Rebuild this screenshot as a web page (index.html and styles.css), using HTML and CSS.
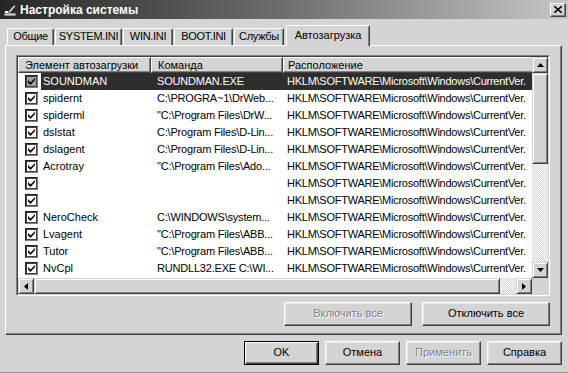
FILE: index.html
```html
<!DOCTYPE html>
<html lang="ru">
<head>
    <meta charset="UTF-8">
    <title>Настройка системы</title>
    <link rel="stylesheet" href="styles.css">
</head>
<body>
    <div class="window">
        <div class="titlebar">
            <svg class="title-icon" width="14" height="14" viewBox="0 0 14 14">
                <path d="M4 10 L11 2 L13 3 L6 11 Z" fill="#e8e8e8" stroke="#222" stroke-width="0.8"/>
                <rect x="1" y="10" width="12" height="3" fill="#d0d0d0" stroke="#333" stroke-width="0.8"/>
                <rect x="2" y="8" width="3" height="2" fill="#fff"/>
            </svg>
            <span class="title">Настройка системы</span>
            <div class="close-btn">
                <svg width="8" height="7" viewBox="0 0 8 7"><path d="M0 0 L8 7 M8 0 L0 7" stroke="#000" stroke-width="1.6"/></svg>
            </div>
        </div>

        <div class="content">
            <div class="tabs">
                <div class="tab tab-general">Общие</div>
                <div class="tab tab-system">SYSTEM.INI</div>
                <div class="tab tab-win">WIN.INI</div>
                <div class="tab tab-boot">BOOT.INI</div>
                <div class="tab tab-services">Службы</div>
                <div class="tab tab-startup active">Автозагрузка</div>
            </div>

            <div class="panel">
                <div class="listview">
                    <div class="lv-inner">
                        <div class="lv-view">
                            <div class="lv-header">
                                <div class="hcell col-name">Элемент автозагрузки</div>
                                <div class="hcell col-cmd">Команда</div>
                                <div class="hcell col-loc">Расположение</div>
                            </div>
                            <div class="lv-rows" id="rows"></div>
                        </div>
                        <div class="vscroll">
                            <div class="sb-btn"><svg width="7" height="4" viewBox="0 0 7 4"><path d="M3.5 0 L7 4 L0 4 Z"/></svg></div>
                            <div class="sb-thumb v-thumb"></div>
                            <div class="sb-track"></div>
                            <div class="sb-btn"><svg width="7" height="4" viewBox="0 0 7 4"><path d="M0 0 L7 0 L3.5 4 Z"/></svg></div>
                        </div>
                        <div class="hscroll">
                            <div class="sb-btn"><svg width="4" height="7" viewBox="0 0 4 7"><path d="M4 0 L4 7 L0 3.5 Z"/></svg></div>
                            <div class="sb-thumb h-thumb"></div>
                            <div class="sb-track"></div>
                            <div class="sb-btn"><svg width="4" height="7" viewBox="0 0 4 7"><path d="M0 0 L4 3.5 L0 7 Z"/></svg></div>
                        </div>
                        <div class="sb-corner"></div>
                    </div>
                </div>
                <div class="panel-buttons">
                    <div class="btn wide disabled">Включить все</div>
                    <div class="btn wide">Отключить все</div>
                </div>
            </div>

            <div class="dialog-buttons">
                <div class="btn default">OK</div>
                <div class="btn">Отмена</div>
                <div class="btn disabled">Применить</div>
                <div class="btn">Справка</div>
            </div>
        </div>
    </div>

    <script>
        // startup items as listed in the dialog
        const loc = 'HKLM\\SOFTWARE\\Microsoft\\Windows\\CurrentVer.';
        const items = [
            ['SOUNDMAN', 'SOUNDMAN.EXE'],
            ['spidernt', 'C:\\PROGRA~1\\DrWeb...'],
            ['spiderml', '"C:\\Program Files\\DrW...'],
            ['dslstat', 'C:\\Program Files\\D-Lin...'],
            ['dslagent', 'C:\\Program Files\\D-Lin...'],
            ['Acrotray', '"C:\\Program Files\\Ado...'],
            ['', ''],
            ['', ''],
            ['NeroCheck', 'C:\\WINDOWS\\system...'],
            ['Lvagent', '"C:\\Program Files\\ABB...'],
            ['Tutor', '"C:\\Program Files\\ABB...'],
            ['NvCpl', 'RUNDLL32.EXE C:\\WI...']
        ];

        const rows = document.getElementById('rows');
        const check = '<svg width="7" height="7" viewBox="0 0 7 7"><path d="M0 2 L0 4.5 L2.5 7 L7 2 L7 0 L2.5 4.5 Z"/></svg>';

        items.forEach((item, i) => {
            const row = document.createElement('div');
            row.className = 'row' + (i === 0 ? ' selected' : '');
            row.innerHTML = `<div class="cell-check"><span class="checkbox">${check}</span></div>
                <div class="cell-data">
                    <div class="cell cell-name">${item[0]}</div>
                    <div class="cell cell-cmd">${item[1]}</div>
                    <div class="cell cell-loc">${loc}</div>
                </div>`;
            rows.appendChild(row);
        });
    </script>
</body>
</html>
```

FILE: styles.css
```css
body {
	margin: 0;
	font-family: "Liberation Sans", Arial, sans-serif;
	font-size: 11px;
	font-weight: normal;
	color: #000;
	background: #d4d4d4;
}

.window {
	width: 568px;
	height: 373px;
	box-sizing: border-box;
	background: #d4d4d4;
	border-bottom: 1px solid #9a9a9a;
	overflow: hidden;
}

.titlebar {
	height: 19px;
	display: flex;
	align-items: center;
	padding: 0 2px 0 3px;
	background: linear-gradient(to right, #262626, #6e6e6e 50%, #c6c6c6);
}

.title-icon {
	margin-right: 3px;
}

.title {
	flex: 1;
	color: #fff;
	font-weight: bold;
	font-size: 12px;
}

.close-btn {
	width: 16px;
	height: 14px;
	box-sizing: border-box;
	display: flex;
	align-items: center;
	justify-content: center;
	background: #d4d4d4;
	border: 1px solid;
	border-color: #fff #404040 #404040 #fff;
	box-shadow: inset -1px -1px #808080;
}

.content {
	padding: 6px 6px 0 5px;
}

/* tabs */
.tabs {
	position: relative;
	z-index: 1;
	display: flex;
	align-items: flex-end;
	height: 21px;
	margin-bottom: -1px;
	padding-left: 2px;
	gap: 1px;
}

.tab {
	height: 17px;
	box-sizing: border-box;
	margin-bottom: 1px;
	text-align: center;
	letter-spacing: -0.3px;
	line-height: 15px;
	white-space: nowrap;
	background: #d4d4d4;
	border: 1px solid;
	border-bottom: none;
	border-color: #fff #404040 #404040 #fff;
	border-radius: 2px 2px 0 0;
	box-shadow: inset -1px 0 #808080;
}

.tab-general { width: 47px; }
.tab-system { width: 67px; }
.tab-win { width: 50px; }
.tab-boot { width: 59px; }
.tab-services { width: 50px; }
.tab-startup { width: 84px; margin-left: 1px; }

.tab.active {
	height: 21px;
	margin-bottom: 0;
	line-height: 18px;
	letter-spacing: 0;
}

.panel {
	height: 290px;
	box-sizing: border-box;
	padding: 9px 11px 0 10px;
	border: 1px solid;
	border-color: #fff #404040 #404040 #fff;
	box-shadow: inset -1px -1px #808080;
}

/* list view */
.listview {
	width: 534px;
	height: 241px;
	box-sizing: border-box;
	border: 1px solid;
	border-color: #808080 #fff #fff #808080;
}

.lv-inner {
	height: 100%;
	box-sizing: border-box;
	border: 1px solid;
	border-color: #404040 #d4d4d4 #d4d4d4 #404040;
	background: #fff;
	display: grid;
	grid-template-columns: 514px 16px;
	grid-template-rows: 221px 16px;
}

.lv-view {
	overflow: hidden;
}

.lv-header {
	display: flex;
	height: 16px;
	width: 600px;
}

.hcell {
	box-sizing: border-box;
	height: 16px;
	line-height: 14px;
	padding-left: 6px;
	white-space: nowrap;
	background: #d4d4d4;
	border: 1px solid;
	border-color: #fff #404040 #404040 #fff;
	box-shadow: inset -1px -1px #808080;
}

.col-name { width: 133px; }
.col-cmd { width: 132px; }
.col-loc { flex: 1; padding-left: 4px; }

.row {
	display: flex;
	height: 17px;
	width: 600px;
}

.cell-check {
	width: 23px;
	display: flex;
	align-items: center;
	padding-left: 7px;
	box-sizing: border-box;
}

.checkbox {
	width: 13px;
	height: 13px;
	box-sizing: border-box;
	display: flex;
	align-items: center;
	justify-content: center;
	background: #fff;
	border: 1px solid;
	border-color: #202020 #808080 #808080 #202020;
	box-shadow: inset 1px 1px #404040, inset -1px -1px #404040;
}

.cell-data {
	display: flex;
	flex: 1;
	line-height: 17px;
	white-space: nowrap;
}

.cell-name { width: 110px; padding-left: 2px; box-sizing: border-box; }
.cell-cmd { width: 132px; padding-left: 6px; box-sizing: border-box; letter-spacing: -0.2px; }
.cell-loc { padding-left: 4px; width: 249px; box-sizing: border-box; letter-spacing: -0.25px; }

.selected .cell-data {
	background: #2e2e2e;
	color: #fff;
}

.selected .checkbox {
	background: #a0a0a0;
}

/* scroll bars */
.vscroll, .hscroll {
	display: flex;
	background: #d4d4d4;
}

.vscroll { flex-direction: column; }

.sb-btn, .sb-thumb {
	flex: none;
	width: 16px;
	height: 16px;
	box-sizing: border-box;
	display: flex;
	align-items: center;
	justify-content: center;
	background: #d4d4d4;
	border: 1px solid;
	border-color: #d4d4d4 #404040 #404040 #d4d4d4;
	box-shadow: inset 1px 1px #fff, inset -1px -1px #808080;
}

.v-thumb { height: 91px; }
.h-thumb { width: 466px; }

.sb-track {
	flex: 1;
	background: repeating-conic-gradient(#d4d4d4 0 25%, #fff 0 50%) 0 0 / 2px 2px;
}

.sb-corner {
	background: #d4d4d4;
}

/* buttons */
.panel-buttons {
	display: flex;
	justify-content: flex-end;
	gap: 10px;
	margin-top: 6px;
}

.dialog-buttons {
	display: flex;
	justify-content: flex-end;
	gap: 6px;
	margin-top: 6px;
}

.btn {
	width: 75px;
	height: 24px;
	box-sizing: border-box;
	text-align: center;
	line-height: 21px;
	font-weight: normal;
	background: #d4d4d4;
	border: 1px solid;
	border-color: #fff #404040 #404040 #fff;
	box-shadow: inset -1px -1px #808080, inset 1px 1px #e6e6e6;
}

.btn.wide {
	width: 128px;
}

.btn.default {
	border: 1px solid #000;
	box-shadow: inset 1px 1px #fff, inset -1px -1px #404040, inset -2px -2px #808080;
}

.btn.disabled {
	color: #808080;
	text-shadow: 1px 1px #fff;
}
```
